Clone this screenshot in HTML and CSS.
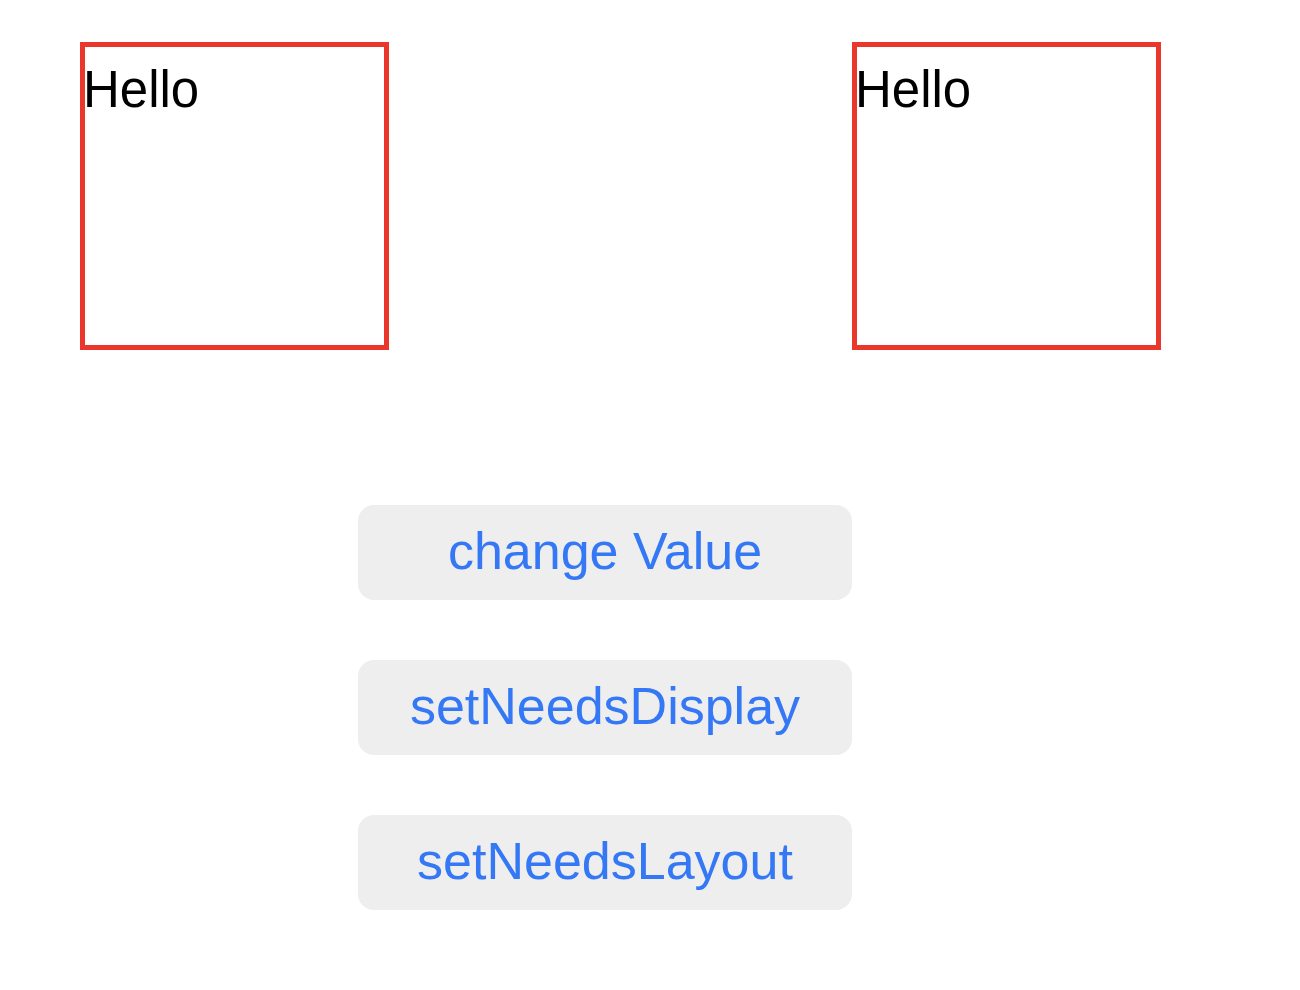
FILE: index.html
```html
<!DOCTYPE html>
<html lang="en">
<head>
    <meta charset="UTF-8">
    <meta name="viewport" content="width=device-width, initial-scale=1.0">
    <title>Layout Demo</title>
    <link rel="stylesheet" href="styles.css">
</head>
<body>
    <div class="screen">
        <div class="boxes">
            <div class="box"><span class="label">Hello</span></div>
            <div class="box"><span class="label">Hello</span></div>
        </div>

        <div class="actions">
            <button class="action">change Value</button>
            <button class="action">setNeedsDisplay</button>
            <button class="action">setNeedsLayout</button>
        </div>
    </div>
</body>
</html>
```

FILE: styles.css
```css
body {
    margin: 0;
    background-color: #ffffff;
    font-family: 'Liberation Sans', Arial, Helvetica, sans-serif;
}

.screen {
    padding: 42px 0 0 80px;
}

.boxes {
    display: flex;
    gap: 463px;
}

.box {
    box-sizing: border-box;
    width: 309px;
    height: 308px;
    border: 5px solid #e9372b;
    padding-top: 18px;
}

.label {
    display: block;
    font-size: 51px;
    line-height: 50px;
    color: #000000;
    margin-left: -2px;
}

.actions {
    display: flex;
    flex-direction: column;
    gap: 60px;
    margin: 155px 0 0 278px;
}

.action {
    width: 494px;
    height: 95px;
    border: none;
    border-radius: 16px;
    background-color: #eeeeee;
    color: #3478f6;
    font-family: 'Liberation Sans', Arial, Helvetica, sans-serif;
    font-size: 52px;
    padding: 0 0 4px;
    cursor: pointer;
}
```
